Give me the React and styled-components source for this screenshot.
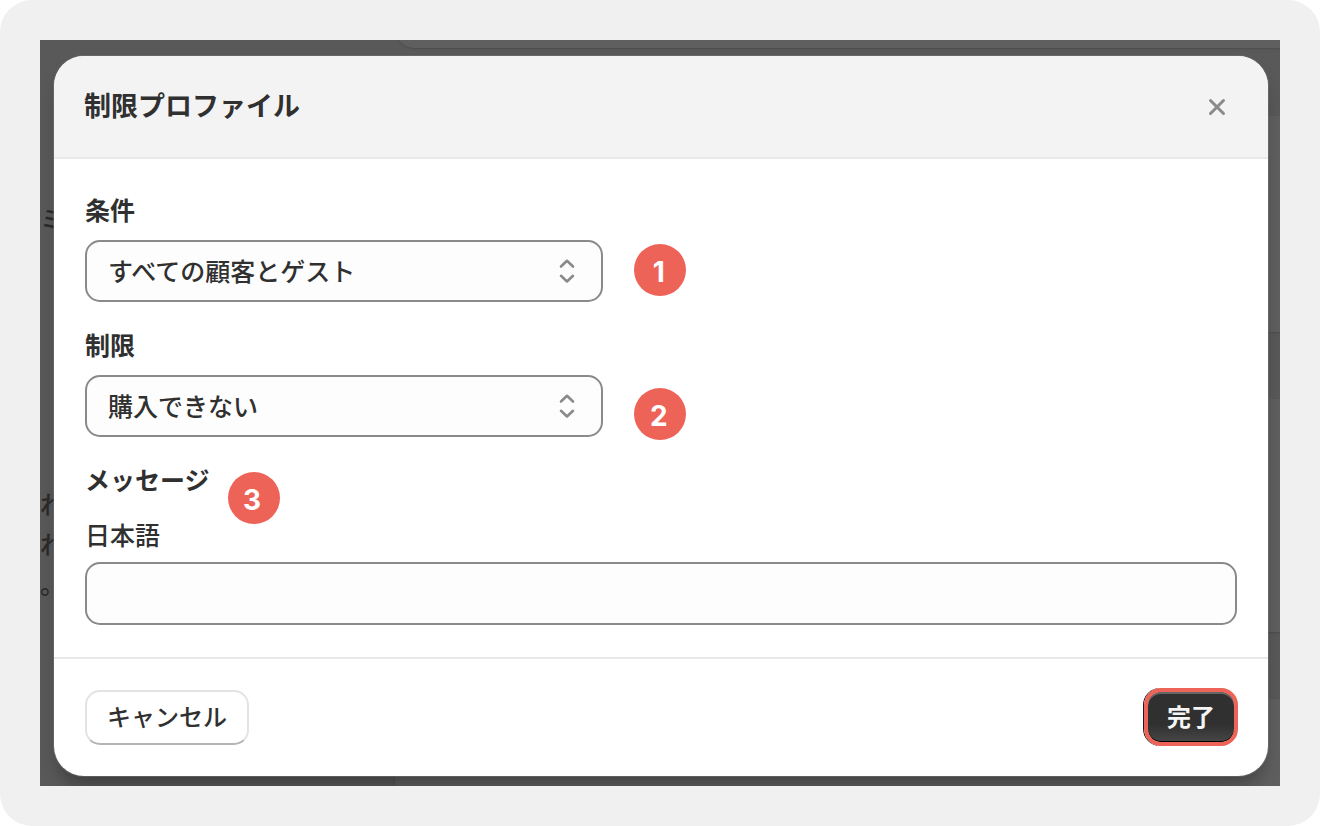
import React, { useState } from 'react';
import styled, { createGlobalStyle } from 'styled-components';

const theme = {
  frame: '#f0f0f0',
  text: '#303030',
  muted: '#8a8a8a',
  border: '#8a8a8a',
  divider: '#e8e8e8',
  accent: '#ed6358'
};

const GlobalStyle = createGlobalStyle`
  * {
    box-sizing: border-box;
  }
  body {
    margin: 0;
    background: #ffffff;
    color: ${theme.text};
    font-family: 'Noto Sans CJK JP', 'Noto Sans', sans-serif;
  }
  button, input, select {
    font-family: inherit;
    color: inherit;
  }
`;

const Frame = styled.main`
  min-height: 100vh;
  display: flex;
  padding: 40px;
  border-radius: 32px;
  background: ${theme.frame};
`;

const Stage = styled.div`
  position: relative;
  flex: 1;
  padding: 16px 12px 10px 14px;
  overflow: hidden;
  background: #595959;
`;

// The dimmed page that shows around the dialog
const PageBehind = styled.div`
  position: absolute;
  inset: 0;
  display: flex;
`;

const PageNotes = styled.div`
  flex: 0 0 355px;
  padding-top: 158px;
  color: #2b2b2b;
  font-size: 25px;
  line-height: 40px;
  font-weight: 500;

  p {
    margin: 0;
  }
  p + p {
    margin-top: 245px;
  }
`;

const PageCards = styled.div`
  flex: 1;
  display: flex;
  flex-direction: column;
`;

const Card = styled.div`
  height: ${(p) => p.$height}px;
  margin-bottom: ${(p) => p.$gap || 0}px;
  flex-grow: ${(p) => (p.$grow ? 1 : 0)};
  border-bottom-left-radius: ${(p) => (p.$grow ? 0 : 20)}px;
  background: #5f5f5f;
  box-shadow: 0 1px 2px 0 #4c4c4c;
`;

const TopCard = styled(Card)`
  height: 48px;
  margin-top: -40px;
`;

const Shadow = styled.div`
  position: relative;
  border-radius: 30px;
  box-shadow: 0 0 0 1px rgba(120, 120, 120, 0.5), 0 14px 20px -6px rgba(0, 0, 0, 0.35);
`;

const Dialog = styled.section`
  border-radius: 30px;
  overflow: hidden;
  background: #ffffff;
`;

const Header = styled.header`
  display: flex;
  align-items: center;
  justify-content: space-between;
  height: 103px;
  padding: 0 42px 0 30px;
  border-bottom: 2px solid ${theme.divider};
  background: #f3f3f3;
`;

const Title = styled.h1`
  margin: 0;
  padding-bottom: 3px;
  font-size: 27px;
  line-height: 40px;
  font-weight: 700;
`;

const CloseButton = styled.button`
  display: flex;
  padding: 0;
  border: 0;
  background: none;
  color: ${theme.muted};
  cursor: pointer;
`;

const Body = styled.div`
  display: flex;
  flex-direction: column;
  gap: 22px;
  padding: 30px 31px 32px;
`;

const Field = styled.div`
  display: flex;
  flex-direction: column;
  gap: 11px;
`;

const Label = styled.label`
  align-self: flex-start;
  font-size: 25px;
  line-height: 40px;
  font-weight: ${(p) => (p.$plain ? 500 : 700)};
`;

const SelectBox = styled.div`
  position: relative;
  width: 45%;

  svg {
    position: absolute;
    top: 18px;
    right: 27px;
    color: ${theme.muted};
    pointer-events: none;
  }
`;

const Select = styled.select`
  display: block;
  width: 100%;
  height: 62px;
  padding: 0 60px 3px 21px;
  appearance: none;
  border: 2px solid ${theme.border};
  border-radius: 15px;
  background: #fdfdfd;
  font-size: 25px;
  font-weight: 500;
`;

const Message = styled.fieldset`
  min-width: 0;
  margin: 0;
  padding: 0;
  border: 0;
`;

const Legend = styled.legend`
  position: relative;
  margin-bottom: 15px;
  padding: 0;
  font-size: 25px;
  line-height: 40px;
  font-weight: 700;
`;

const MessageField = styled(Field)`
  gap: 8px;
`;

const TextInput = styled.input`
  width: 100%;
  height: 63px;
  padding: 0 22px;
  border: 2px solid ${theme.border};
  border-radius: 15px;
  background: #fdfdfd;
  font-size: 25px;
`;

const Badge = styled.span`
  position: absolute;
  top: ${(p) => p.$top}px;
  left: ${(p) => p.$left};
  display: flex;
  align-items: center;
  justify-content: center;
  width: 52px;
  height: 52px;
  padding: 3px 3px 0 0;
  border-radius: 50%;
  background: ${theme.accent};
  color: #ffffff;
  font-family: Inter, sans-serif;
  font-size: 28px;
  line-height: 32px;
  font-weight: 700;
`;

const Footer = styled.footer`
  display: flex;
  align-items: center;
  justify-content: space-between;
  padding: 29px 30px 30px 31px;
  border-top: 2px solid ${theme.divider};
`;

const Button = styled.button`
  height: 55px;
  padding: 0 20px 2px;
  border: 2px solid #e3e3e3;
  border-bottom-color: #b5b5b5;
  border-radius: 15px;
  background: #ffffff;
  font-size: 24px;
  line-height: 32px;
  font-weight: 500;
  cursor: pointer;
`;

const PrimaryButton = styled(Button)`
  height: 58px;
  padding: 0 19px 2px;
  border: 4px solid ${theme.accent};
  border-radius: 17px;
  background: linear-gradient(#303030 65%, #474747) padding-box;
  box-shadow: -1px 0 0 #1a1a1a, inset 0 2px 0 #666666, inset 0 -1px 0 #000000;
  color: #f5f5f5;
  font-weight: 700;
`;

function CloseIcon() {
  return (
    <svg width="18" height="18" viewBox="0 0 18 18" fill="none" stroke="currentColor" strokeWidth="3" strokeLinecap="round" aria-hidden="true">
      <path d="M2.5 2.5l13 13M15.5 2.5l-13 13" />
    </svg>
  );
}

function SelectIcon() {
  return (
    <svg width="18" height="26" viewBox="0 0 18 26" fill="none" stroke="currentColor" strokeWidth="2.6" strokeLinecap="round" strokeLinejoin="round" aria-hidden="true">
      <path d="M3 8.5L9 2.8l6 5.7M3 17.8l6 5.7 6-5.7" />
    </svg>
  );
}

function SelectField({ id, label, options, badge, badgeTop }) {
  const [value, setValue] = useState(options[0]);

  return (
    <Field>
      <Label htmlFor={id}>{label}</Label>
      <SelectBox>
        <Select id={id} value={value} onChange={(e) => setValue(e.target.value)}>
          {options.map((option) => (
            <option key={option}>{option}</option>
          ))}
        </Select>
        <SelectIcon />
        <Badge $top={badgeTop} $left="calc(100% + 31px)">{badge}</Badge>
      </SelectBox>
    </Field>
  );
}

function App() {
  const [message, setMessage] = useState('');

  return (
    <>
      <GlobalStyle />
      <Frame>
        <Stage>
          <PageBehind aria-hidden="true">
            <PageNotes>
              <p>ミ</p>
              <p>れ<br />れ<br />。</p>
            </PageNotes>
            <PageCards>
              <TopCard $gap={68} />
              <Card $height={216} $gap={67} />
              <Card $height={233} $gap={67} />
              <Card $height={87} $grow />
            </PageCards>
          </PageBehind>

          <Shadow>
            <Dialog role="dialog" aria-labelledby="dialog-title">
              <Header>
                <Title id="dialog-title">制限プロファイル</Title>
                <CloseButton type="button" aria-label="閉じる">
                  <CloseIcon />
                </CloseButton>
              </Header>

              <Body>
                <SelectField id="condition" label="条件" options={['すべての顧客とゲスト']} badge="1" badgeTop={4} />
                <SelectField id="restriction" label="制限" options={['購入できない']} badge="2" badgeTop={13} />
                <Message>
                  <Legend>
                    メッセージ
                    <Badge $top={13} $left="calc(100% + 18px)">3</Badge>
                  </Legend>
                  <MessageField>
                    <Label htmlFor="message-ja" $plain>日本語</Label>
                    <TextInput id="message-ja" type="text" value={message} onChange={(e) => setMessage(e.target.value)} />
                  </MessageField>
                </Message>
              </Body>

              <Footer>
                <Button type="button">キャンセル</Button>
                <PrimaryButton type="button">完了</PrimaryButton>
              </Footer>
            </Dialog>
          </Shadow>
        </Stage>
      </Frame>
    </>
  );
}

export default App;
